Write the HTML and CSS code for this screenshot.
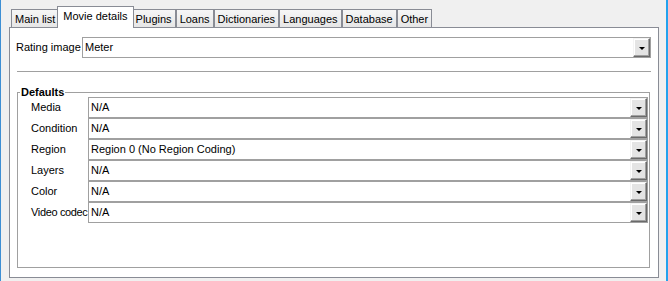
FILE: index.html
```html
<!DOCTYPE html>
<html>
<head>
<meta charset="utf-8">
<link rel="stylesheet" href="styles.css">
</head>
<body>
<div class="window">
  <div class="tabs">
    <div class="tab">Main list</div>
    <div class="tab active">Movie details</div>
    <div class="tab">Plugins</div>
    <div class="tab">Loans</div>
    <div class="tab">Dictionaries</div>
    <div class="tab">Languages</div>
    <div class="tab">Database</div>
    <div class="tab">Other</div>
  </div>
  <div class="panel">
    <div class="row">
      <span class="label wide">Rating image</span>
      <div class="combo"><span class="value">Meter</span><span class="btn"><i class="arrow"></i></span></div>
    </div>
    <div class="sep"></div>
    <fieldset class="group">
      <legend>Defaults</legend>
      <div class="rows">
        <div class="row"><span class="label">Media</span><div class="combo"><span class="value">N/A</span><span class="btn"><i class="arrow"></i></span></div></div>
        <div class="row"><span class="label">Condition</span><div class="combo"><span class="value">N/A</span><span class="btn"><i class="arrow"></i></span></div></div>
        <div class="row"><span class="label">Region</span><div class="combo"><span class="value">Region 0 (No Region Coding)</span><span class="btn"><i class="arrow"></i></span></div></div>
        <div class="row"><span class="label">Layers</span><div class="combo"><span class="value">N/A</span><span class="btn"><i class="arrow"></i></span></div></div>
        <div class="row"><span class="label">Color</span><div class="combo"><span class="value">N/A</span><span class="btn"><i class="arrow"></i></span></div></div>
        <div class="row"><span class="label tight">Video codec</span><div class="combo"><span class="value">N/A</span><span class="btn"><i class="arrow"></i></span></div></div>
      </div>
    </fieldset>
  </div>
</div>
</body>
</html>
```

FILE: styles.css
```css
* { box-sizing: border-box; }
html, body { margin: 0; padding: 0; }
body {
  width: 668px;
  height: 281px;
  overflow: hidden;
  background: #f0f0f0;
  font: 11px "Liberation Sans", Arial, sans-serif;
  color: #000;
}
.window {
  height: 281px;
  border-left: 1px solid #3d8fd4;
  border-right: 2px solid #22a2ee;
  padding: 6px 0 0 8px;
}
.tabs {
  display: flex;
  align-items: flex-end;
  height: 22px;
  margin-bottom: -1px;
  padding-left: 2px;
  position: relative;
  z-index: 1;
}
.tab {
  height: 18px;
  line-height: 18px;
  padding: 0 3px;
  margin-bottom: 1px;
  border: 1px solid #898c95;
  border-bottom: 0;
  background: linear-gradient(#f6f6f6, #e6e6e6);
  white-space: nowrap;
}
.tab.active {
  height: 22px;
  line-height: 19px;
  margin: 0 -2px;
  padding: 0 5px;
  background: #fff;
  position: relative;
  z-index: 1;
}
.panel {
  width: 650px;
  height: 251px;
  border: 1px solid #898c95;
  background: #fff;
  padding: 9px 7px 9px 6px;
  display: flex;
  flex-direction: column;
}
.row {
  display: flex;
  height: 21px;
}
.label {
  width: 57px;
  line-height: 21px;
  white-space: nowrap;
}
.label.wide { width: 66px; }
.label.tight { letter-spacing: -0.35px; }
.combo {
  flex: 1;
  min-width: 0;
  display: flex;
  border: 1px solid #a0a0a0;
  background: #fff;
}
.value {
  flex: 1;
  padding-left: 2px;
  line-height: 19px;
  white-space: nowrap;
}
.btn {
  width: 17px;
  height: 19px;
  display: flex;
  align-items: center;
  justify-content: center;
  border: 1px solid;
  border-color: #f4f4f4 #6a6a6a #6a6a6a #f4f4f4;
  box-shadow: inset -1px -1px 0 #a0a0a0, inset 1px 1px 0 #fff;
  background: #e4e4e4;
}
.arrow {
  display: block;
  width: 0;
  height: 0;
  border-left: 3px solid transparent;
  border-right: 3px solid transparent;
  border-top: 3px solid #000;
  margin-top: 1px;
}
.sep {
  height: 1px;
  background: #a0a0a0;
  margin: 13px 0 0 1px;
  flex: none;
}
.group {
  flex: 1;
  margin: 14px 1px 0 1px;
  padding: 0;
  border: 1px solid #a0a0a0;
  min-width: 0;
}
.group legend {
  margin-left: 2px;
  padding: 0 1px;
  font-weight: bold;
  line-height: 12px;
}
.rows {
  margin-top: -1px;
  padding: 0 1px 0 13px;
}
```
